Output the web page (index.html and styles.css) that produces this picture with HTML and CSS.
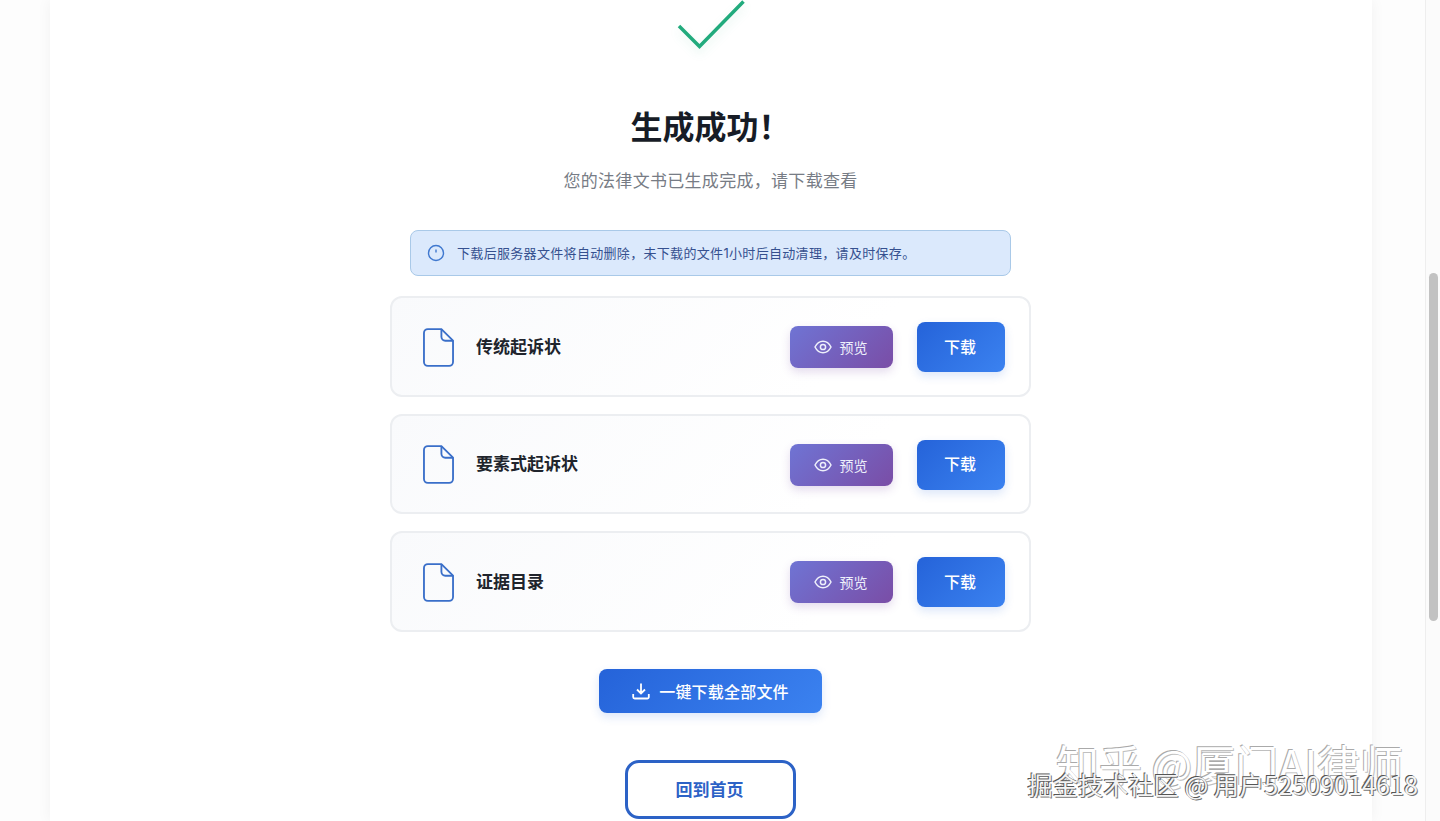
FILE: index.html
```html
<!DOCTYPE html>
<html lang="zh-CN">
<head>
  <meta charset="UTF-8" />
  <meta name="viewport" content="width=device-width, initial-scale=1" />
  <title>生成成功</title>
  <link rel="stylesheet" href="styles.css">
</head>
<body>

<div class="page">
  <main class="panel">
    <svg class="check" viewBox="0 0 70 50" width="70" height="50" aria-hidden="true">
      <path d="M3 26 L23.5 46.5 L67.5 1.5" />
    </svg>
    <h1 class="title">生成成功！</h1>
    <p class="subtitle">您的法律文书已生成完成，请下载查看</p>

    <div class="notice">
      <svg viewBox="0 0 18 18" width="18" height="18" aria-hidden="true">
        <circle cx="9" cy="9" r="7.5" />
        <path d="M9 5.5 V8.5" />
      </svg>
      <span>下载后服务器文件将自动删除，未下载的文件1小时后自动清理，请及时保存。</span>
    </div>

    <div class="file-list">
      <div class="file-row">
        <svg class="file-icon" viewBox="0 0 32 40" width="31" height="39" aria-hidden="true">
          <path d="M5 1 H19 L31 13 V35 a4 4 0 0 1 -4 4 H5 a4 4 0 0 1 -4 -4 V5 a4 4 0 0 1 4 -4 Z" />
          <path d="M19 1 V9 a4 4 0 0 0 4 4 H31" />
        </svg>
        <span class="file-name">传统起诉状</span>
        <button class="btn-preview">
          <svg viewBox="0 0 18 14" width="18" height="14" aria-hidden="true">
            <path d="M1 7 C3 3 6 1.2 9 1.2 S15 3 17 7 C15 11 12 12.8 9 12.8 S3 11 1 7 Z" />
            <circle cx="9" cy="7" r="2.6" />
          </svg>
          预览
        </button>
        <button class="btn-download">下载</button>
      </div>

      <div class="file-row">
        <svg class="file-icon" viewBox="0 0 32 40" width="31" height="39" aria-hidden="true">
          <path d="M5 1 H19 L31 13 V35 a4 4 0 0 1 -4 4 H5 a4 4 0 0 1 -4 -4 V5 a4 4 0 0 1 4 -4 Z" />
          <path d="M19 1 V9 a4 4 0 0 0 4 4 H31" />
        </svg>
        <span class="file-name">要素式起诉状</span>
        <button class="btn-preview">
          <svg viewBox="0 0 18 14" width="18" height="14" aria-hidden="true">
            <path d="M1 7 C3 3 6 1.2 9 1.2 S15 3 17 7 C15 11 12 12.8 9 12.8 S3 11 1 7 Z" />
            <circle cx="9" cy="7" r="2.6" />
          </svg>
          预览
        </button>
        <button class="btn-download">下载</button>
      </div>

      <div class="file-row">
        <svg class="file-icon" viewBox="0 0 32 40" width="31" height="39" aria-hidden="true">
          <path d="M5 1 H19 L31 13 V35 a4 4 0 0 1 -4 4 H5 a4 4 0 0 1 -4 -4 V5 a4 4 0 0 1 4 -4 Z" />
          <path d="M19 1 V9 a4 4 0 0 0 4 4 H31" />
        </svg>
        <span class="file-name">证据目录</span>
        <button class="btn-preview">
          <svg viewBox="0 0 18 14" width="18" height="14" aria-hidden="true">
            <path d="M1 7 C3 3 6 1.2 9 1.2 S15 3 17 7 C15 11 12 12.8 9 12.8 S3 11 1 7 Z" />
            <circle cx="9" cy="7" r="2.6" />
          </svg>
          预览
        </button>
        <button class="btn-download">下载</button>
      </div>
    </div>

    <button class="btn-all">
      <svg viewBox="0 0 18 18" width="18" height="18" aria-hidden="true">
        <path d="M9 1.5 V11 M5 7.5 L9 11.5 L13 7.5 M1.2 12 V15 a1.5 1.5 0 0 0 1.5 1.5 H15.3 a1.5 1.5 0 0 0 1.5 -1.5 V12" />
      </svg>
      一键下载全部文件
    </button>
    <button class="btn-home">回到首页</button>
  </main>

  <div class="scrollbar"><div class="scrollbar-thumb"></div></div>
</div>

<div class="watermark">
  <div class="mark-top">知乎 @厦门AI律师</div>
  <div class="mark-bottom">掘金技术社区 @ 用户52509014618</div>
</div>

</body>
</html>
```

FILE: styles.css
```css
* {
  box-sizing: border-box;
}

body {
  margin: 0;
  height: 821px;
  overflow: hidden;
  background: #fdfdfd;
  font-family: Inter, 'Noto Sans CJK SC', 'Liberation Sans', sans-serif;
  color: #1a202c;
}

.page {
  display: flex;
  height: 821px;
}

.panel {
  flex: none;
  width: 1322px;
  height: 821px;
  margin-left: 50px;
  padding-right: 1px;
  background: #fff;
  box-shadow: 0 0 14px rgba(0,0,0,0.05);
  display: flex;
  flex-direction: column;
  align-items: center;
  overflow: hidden;
}

.panel > * {
  flex: none;
}

.check {
  fill: none;
  stroke: #22ab7d;
  stroke-width: 3.5;
  filter: drop-shadow(0 5px 5px rgba(34,171,125,0.12));
}

.title {
  margin: 56px 0 0;
  font-size: 32px;
  line-height: 44px;
  font-weight: 700;
  color: #171c26;
}

.subtitle {
  margin: 17px 0 0;
  font-size: 17px;
  line-height: 28px;
  letter-spacing: 0.3px;
  color: #777c85;
}

.notice {
  width: 601px;
  height: 46px;
  margin-top: 35px;
  padding: 0 16px 1px;
  display: flex;
  align-items: center;
  gap: 12px;
  background: #dbe9fc;
  border: 1px solid #a9c9e8;
  border-radius: 8px;
  font-size: 13px;
  letter-spacing: 0.32px;
  color: #35508f;
}

.notice svg {
  flex: none;
  fill: none;
  stroke: #3f78cf;
  stroke-width: 1.4;
}

.file-list {
  margin-top: 20px;
  display: flex;
  flex-direction: column;
  gap: 17px;
}

.file-row {
  width: 641px;
  height: 100.5px;
  padding: 2px 24px 0 31px;
  display: flex;
  align-items: center;
  background: linear-gradient(135deg, #f9fafc, #fff 70%);
  border: 2px solid #eceef1;
  border-radius: 12px;
}

.file-icon {
  flex: none;
  fill: none;
  stroke: #3a6fc9;
  stroke-width: 1.9;
}

.file-name {
  flex: 1;
  margin: 0 0 4px 22px;
  font-size: 17px;
  font-weight: 700;
  color: #20242c;
}

button {
  border: none;
  font-family: inherit;
  display: flex;
  align-items: center;
  justify-content: center;
}

.btn-preview {
  flex: none;
  width: 103px;
  height: 42px;
  gap: 8px;
  border-radius: 8px;
  background: linear-gradient(135deg, #6f74d4, #7a4da6);
  box-shadow: 0 4px 10px rgba(122,77,166,0.2);
  color: #eef0fb;
  font-size: 14px;
}

.btn-preview svg {
  margin-left: -2px;
  fill: none;
  stroke: #eef0fb;
  stroke-width: 1.5;
}

.btn-download {
  flex: none;
  width: 88px;
  height: 50px;
  margin-left: 24px;
  padding: 0 2px 3px 0;
  border-radius: 8px;
  background: linear-gradient(135deg, #2563d9, #3b82f0);
  box-shadow: 0 4px 10px rgba(37,99,217,0.16);
  color: #fff;
  font-size: 16px;
  font-weight: 500;
}

.btn-all {
  width: 223px;
  height: 44px;
  margin-top: 37.5px;
  padding-bottom: 1px;
  gap: 9px;
  border-radius: 8px;
  background: linear-gradient(135deg, #2563d9, #3b82f0);
  box-shadow: 0 4px 10px rgba(37,99,217,0.16);
  color: #fff;
  font-size: 16px;
  letter-spacing: 0.2px;
  font-weight: 500;
}

.btn-all svg {
  fill: none;
  stroke: #fff;
  stroke-width: 1.8;
}

.btn-home {
  width: 171px;
  height: 59px;
  margin-top: 47px;
  padding: 0 2px 2px 0;
  background: #fff;
  border: 3px solid #2c62c6;
  border-radius: 14px;
  color: #2c62c6;
  font-size: 17px;
  font-weight: 700;
}

.scrollbar {
  flex: none;
  width: 15px;
  height: 821px;
  margin-left: 53px;
  background: #fbfbfb;
  border-left: 1px solid #eeeeee;
  padding: 273px 3px 0 3px;
}

.scrollbar-thumb {
  width: 9px;
  height: 348px;
  border-radius: 5px;
  background: #c2c2c2;
}

/* 水印 */
.watermark {
  position: absolute;
  right: 22px;
  bottom: 21px;
  display: flex;
  flex-direction: column;
  align-items: flex-end;
  font-family: 'Noto Sans CJK SC', 'Liberation Sans', sans-serif;
  pointer-events: none;
}

.mark-top {
  margin: 0 15px -20px 0;
  font-size: 43px;
  line-height: 50px;
  color: #fff;
  text-shadow: -1px -1px 0 #aaa, 1px 1px 0 #c0c0c0;
}

.mark-bottom {
  font-size: 25.2px;
  line-height: 32px;
  color: #f4f4f4;
  text-shadow: -1px -1px 0 #555, 1px 1px 0 #777;
}
```
